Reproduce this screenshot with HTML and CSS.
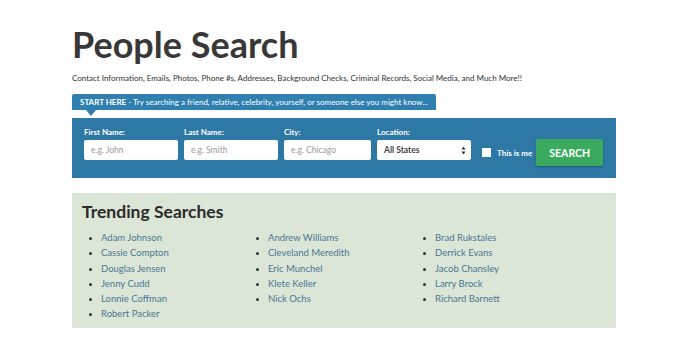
FILE: index.html
```html
<!DOCTYPE html>
<html lang="en">

<head>
    <meta charset="UTF-8">
    <meta name="viewport" content="width=device-width, initial-scale=1.0">
    <title>People Search</title>
    <link rel="stylesheet" href="styles.css">
</head>

<body>
    <div class="container">
        <h1>People Search</h1>
        <p class="tagline">Contact Information, Emails, Photos, Phone #s, Addresses, Background Checks, Criminal Records, Social Media, and Much More!!</p>

        <div class="start-tab">
            <b>START HERE</b> - Try searching a friend, relative, celebrity, yourself, or someone else you might know...
        </div>

        <form class="search-box">
            <div class="field">
                <label>First Name:</label>
                <input type="text" placeholder="e.g. John">
            </div>
            <div class="field">
                <label>Last Name:</label>
                <input type="text" placeholder="e.g. Smith">
            </div>
            <div class="field city">
                <label>City:</label>
                <input type="text" placeholder="e.g. Chicago">
            </div>
            <div class="field">
                <label>Location:</label>
                <div class="select">
                    <span>All States</span>
                    <svg width="5" height="9" viewBox="0 0 5 9">
                        <path d="M2.5 0.5 L4.5 3.5 L0.5 3.5 Z M2.5 8.5 L4.5 5.5 L0.5 5.5 Z" fill="#333"/>
                    </svg>
                </div>
            </div>
            <label class="me"><span class="box"></span>This is me</label>
            <button type="button" class="butn">SEARCH</button>
        </form>

        <div class="trending">
            <h2>Trending Searches</h2>
            <div class="columns">
                <ul>
                    <li>Adam Johnson</li>
                    <li>Cassie Compton</li>
                    <li>Douglas Jensen</li>
                    <li>Jenny Cudd</li>
                    <li>Lonnie Coffman</li>
                    <li>Robert Packer</li>
                </ul>
                <ul>
                    <li>Andrew Williams</li>
                    <li>Cleveland Meredith</li>
                    <li>Eric Munchel</li>
                    <li>Klete Keller</li>
                    <li>Nick Ochs</li>
                </ul>
                <ul>
                    <li>Brad Rukstales</li>
                    <li>Derrick Evans</li>
                    <li>Jacob Chansley</li>
                    <li>Larry Brock</li>
                    <li>Richard Barnett</li>
                </ul>
            </div>
        </div>
    </div>
</body>

</html>
```

FILE: styles.css
```css
body {
    margin: 0;
    background: #fff;
    font-family: Lato, "Open Sans", sans-serif;
    color: #333;
}

.container {
    width: 544px;
    margin-left: 72px;
    padding-top: 22px;
}

h1 {
    margin: 0;
    font-size: 36px;
    font-weight: 700;
    line-height: 44px;
    color: #383838;
}

.tagline {
    margin: 6px 0 0;
    font-size: 8px;
    line-height: 12px;
    color: #333;
}

.start-tab {
    position: relative;
    display: inline-block;
    margin-top: 10px;
    padding: 0 8px;
    height: 16px;
    line-height: 16px;
    background: #2f7fb0;
    color: #fff;
    font-size: 8px;
    border-radius: 2px 2px 0 0;
}

.start-tab:after {
    content: "";
    position: absolute;
    left: 14px;
    bottom: -6px;
    border-left: 5px solid transparent;
    border-right: 5px solid transparent;
    border-top: 6px solid #2f7fb0;
}

.search-box {
    margin-top: 8px;
    height: 60px;
    box-sizing: border-box;
    padding: 9px 12px 0;
    background: #2e78a6;
    display: flex;
    align-items: flex-start;
    gap: 6px;
}

.field {
    display: flex;
    flex-direction: column;
    width: 94px;
}

.field.city {
    width: 87px;
}

.field label {
    color: #fff;
    font-size: 8px;
    font-weight: 700;
    line-height: 11px;
    margin-bottom: 2px;
}

.field input,
.select {
    box-sizing: border-box;
    height: 20px;
    border: 0;
    border-radius: 2px;
    padding: 0 7px;
    font-family: Lato, sans-serif;
    font-size: 8.5px;
    background: #fff;
}

.field input::placeholder {
    color: #9a9a9a;
}

.select {
    display: flex;
    align-items: center;
    justify-content: space-between;
    font-weight: 700;
    color: #444;
    padding-right: 5px;
}

.me {
    display: flex;
    align-items: center;
    height: 11px;
    margin-top: 20px;
    margin-left: 5px;
    color: #fff;
    font-size: 8px;
    font-weight: 700;
}

.box {
    width: 9px;
    height: 9px;
    background: #fff;
    margin-right: 6px;
}

.butn {
    margin-top: 12px;
    margin-left: -2px;
    width: 67px;
    height: 27px;
    border: 0;
    border-radius: 2px;
    background: #3aaa5e;
    color: #fff;
    font-family: Lato, sans-serif;
    font-size: 10.5px;
    font-weight: 700;
    box-shadow: 0 1px 2px rgba(0, 0, 0, 0.3);
}

.trending {
    margin-top: 15px;
    height: 135px;
    box-sizing: border-box;
    padding: 9px 10px 0;
    background: #dbe6d7;
}

h2 {
    margin: 0;
    font-size: 17.5px;
    font-weight: 700;
    line-height: 20px;
    color: #2b2b2b;
}

.columns {
    display: flex;
    margin-top: 8px;
}

ul {
    margin: 0;
    padding-left: 19px;
    width: 148px;
    font-size: 9.5px;
    line-height: 15.3px;
    color: #4a7694;
}

li::marker {
    color: #333;
    font-size: 8px;
}
```
